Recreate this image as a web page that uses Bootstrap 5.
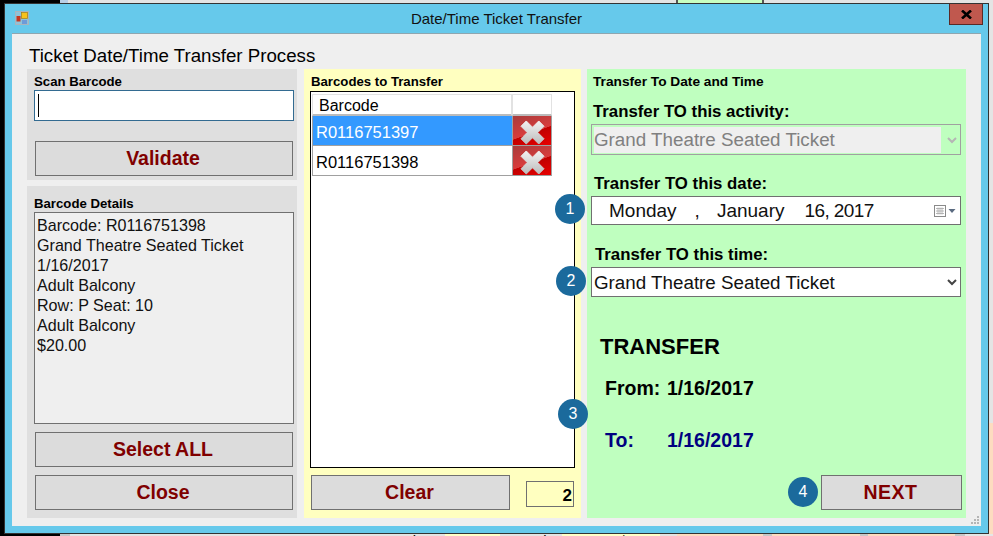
<!DOCTYPE html>
<html><head><meta charset="utf-8"><title>Date/Time Ticket Transfer</title>
<link href="https://cdn.jsdelivr.net/npm/bootstrap@5.3.0/dist/css/bootstrap.min.css" rel="stylesheet">
<style>
html,body{margin:0;height:536px;overflow:hidden;background:#e6e6e6;font-family:"Liberation Sans",Arial,sans-serif;color:#000}
.shell{width:993px;height:536px;display:flex;flex-direction:column}
.strip{display:flex;flex:none;overflow:hidden}
.strip-top{height:3px}
.strip-bot{height:2px;font-size:15px;line-height:13px;font-weight:400;color:#000}
.strip-bot>div{flex:none;height:2px;overflow:hidden;white-space:nowrap}
.midrow{display:flex;flex:none;height:531px}
.leftedge{width:4px;background:#000;flex:none}
.rightedge{width:4px;flex:none;display:flex;flex-direction:column}
.wnd{width:985px;height:531px;background:#66c9eb;border:1px solid #333;padding-left:7px;padding-right:7px;display:flex;flex-direction:column;flex:none}
.tbar{height:29px;flex:none;position:relative}
.tbar .ttl{font-size:15px;line-height:29px;text-align:center;color:#111}
.appico{position:absolute;left:3px;top:7px}
.xbtn{position:absolute;right:-2px;top:0;width:34px;height:21px;background:#c0584e;border:1px solid #5a2a26;border-top:0;display:flex;align-items:center;justify-content:center}
.body-area{width:969px;height:493px;background:#efefef;border-top:1px solid #8ea6b0;position:relative;padding:0 15px;flex:none}
.heading{font-size:18.7px;line-height:22px;height:35px;padding-top:11px;margin-left:2px;box-sizing:border-box;white-space:nowrap}
.cols{display:flex;gap:6px;height:449px}
.col-a{width:270px;margin-right:1px;display:flex;flex-direction:column;gap:6px;flex:none}
.pane-grey{background:#dfdfdf;padding:0 7px}
.pane-scan{height:111px;flex:none}
.pane-det{flex:1}
.ptitle{font-size:13.2px;font-weight:700;line-height:14px;padding-top:6px;height:21px;box-sizing:border-box;white-space:nowrap}
.pane-det .ptitle{padding-top:11px;height:26px}
.scanbox{width:260px;height:31px;background:#fff;border:1px solid #336b91;position:relative}
.scanbox i{position:absolute;left:3px;top:3px;width:1px;height:23px;background:#000}
.wbtn{display:block;background:#dcdcdc;border:1px solid #707070;border-radius:0;color:#800000;font-weight:700;font-size:19.5px;line-height:33px;height:35px;padding:0 2px 0 0;text-align:center;width:258px;margin-left:1px}
.wbtn:hover{background:#dcdcdc;color:#800000;border-color:#707070}
.pane-scan .wbtn{margin-top:20px}
.detbox{width:260px;height:212px;background:#efefef;border:1px solid #707070;font-size:16.1px;line-height:20px;padding:2px 2px;color:#111;white-space:nowrap}
.pane-det .wbtn{margin-top:8px}
.col-b{width:277px;background:#ffffc0;padding:0 0 0 6px;flex:none}
.col-b .ptitle{margin-left:1px}
.gridbox{width:265px;height:377px;background:#fff;border:1px solid #000;padding:2px 0 0 1px;margin-top:1px}
.dg{display:grid;grid-template-columns:200px 40px;font-size:16.5px}
.dg>div{height:30px;line-height:32px;box-sizing:border-box}
.dg>.hd{height:22px;line-height:21px;background:#fff;border:1px solid #e2e2e2;border-bottom:2px solid #bbb;font-size:16px}
.hd.c1{padding-left:6px}
.rowcell{padding-left:3px;border-bottom:1px solid #a0a0a0;border-left:1px solid #a0a0a0}
.rowcell.sel{background:#3399ff;color:#fff}
.delcell{background:linear-gradient(160deg,#a83c3c 0,#d93c3c 55%,#c00000 56%,#e80000 100%);border:1px solid #a0a0a0;border-top:0;display:flex;align-items:center;justify-content:center;padding:3px 0 0}
.footb{display:flex;align-items:flex-start;margin-top:7px}
.footb .wbtn{width:199px;margin-left:1px}
.cnt{width:48px;height:26px;margin-left:16px;background:#ffffc0;border:1px solid #707070;font-size:17px;font-weight:700;line-height:27px;text-align:right;padding-right:1px;margin-top:6px}
.col-c{width:379px;background:#bfffbf;position:relative;padding:0 5px 0 6px;flex:none}
.title-c{font-size:13.7px}
.lbl{font-size:16.8px;font-weight:700;line-height:20px;white-space:nowrap}
.lb1{margin-top:12px}.lb2{margin-top:19px;margin-left:1px}.lb3{margin-top:20px;margin-left:2px}
.fld{width:370px;height:31px;margin-top:2px;border:1px solid #a0a0a0;font-size:18.8px;position:relative;line-height:27px;padding:0 2px;display:flex;align-items:center;justify-content:space-between;margin-left:-2px;white-space:nowrap}
.fld.dis{background:#bfffbf;padding:2px;color:#808080}
.fld.dis span{background:#efefef;width:347px;height:26px;line-height:26px;display:block}
.fld.on{background:#fff;border-color:#707070;color:#111}
.fld.dt{height:29px}.fld.tm{height:30px}
.fld svg{flex:none}
.dtx{display:flex;font-size:19px;padding-left:15px}
.dtx .g1{margin-left:18px}.dtx .g2{margin-left:17px}.dtx .g3{margin-left:20px;letter-spacing:-.6px}
.calico{margin-right:2px}
.mark1{position:absolute;width:30px;height:30px;border-radius:50%;background:#1b6a9c;color:#fff;font-size:16px;line-height:29px;text-align:center}
.m1{left:-32px;top:125px}.m2{left:-31px;top:197px}.m3{left:-29px;top:330px}.m4{left:201px;top:408px}
.trn{font-size:22px;font-weight:700;line-height:24px;margin-top:38px;margin-left:7px}
.fr{font-size:19.5px;font-weight:700;line-height:22px;display:flex;margin-left:12px}
.fr span:first-child{width:62px}
.fr1{margin-top:18px}.fr2{margin-top:30px}
.navy{color:#000080}
.wbtn.nx{position:absolute;left:234px;bottom:8px;width:141px;margin:0;letter-spacing:.5px}
.grip{position:absolute;right:2px;bottom:2px}
.sg-blk{background:#000}.sg-blu{background:#b9cfe6}.sg-gry{background:#e4e4e4}.sg-drk{background:#555}.sg-grn{background:#c8ffc0}.sg-yel{background:#ffffc8}.sg-pch{background:#fddcc0}.sg-mid{background:#c8c8c8}
.ra{text-align:right;padding-right:3px}.pl{padding-left:15px}
.w60{width:60px}.w8{width:8px}.w608{width:608px}.w2{width:2px}.w84{width:84px}.fx{flex:1}
.w10{width:10px}.w302{width:302px}.w73{width:73px}.w55{width:55px}.w62{width:62px}.w98{width:98px}.w17{width:17px}.w86{width:86px}.w9{width:9px}.w88{width:88px}.w87{width:87px}
.h420{height:420px}
</style></head><body>
<div class="shell">
 <div class="strip strip-top">
  <div class="sg-blk w60"></div><div class="sg-blu w8"></div><div class="sg-gry w608"></div><div class="sg-drk w2"></div><div class="sg-grn w84"></div><div class="sg-drk w2"></div><div class="sg-gry fx"></div>
 </div>
 <div class="midrow">
  <div class="leftedge"></div>
  <div class="wnd">
   <div class="tbar">
    <svg class="appico" width="14" height="14" viewBox="0 0 14 14"><rect x=".5" y=".5" width="13" height="13" fill="#8fc3d8" stroke="#aab4bc"/><rect x="6.500" y="1.500" width="6" height="6" fill="#f7c21b" stroke="#a87c10" stroke-width=".7"/><rect x="1.500" y="5" width="4" height="5.500" fill="#c8361e"/><rect x="7" y="9" width="5" height="4" fill="#6d9bd8"/></svg>
    <div class="ttl">Date/Time Ticket Transfer</div>
    <div class="xbtn"><svg width="11" height="9" viewBox="0 0 11 9"><path d="M1 .5l9 8M10 .5l-9 8" stroke="#000" stroke-width="2.600"/></svg></div>
   </div>
   <div class="body-area">
    <div class="heading">Ticket Date/Time Transfer Process</div>
    <div class="cols">
     <div class="col-a">
      <div class="pane-grey pane-scan">
       <div class="ptitle">Scan Barcode</div>
       <div class="scanbox"><i></i></div>
       <button class="btn wbtn">Validate</button>
      </div>
      <div class="pane-grey pane-det">
       <div class="ptitle">Barcode Details</div>
       <div class="detbox">Barcode: R0116751398<br>Grand Theatre Seated Ticket<br>1/16/2017<br>Adult Balcony<br>Row: P Seat: 10<br>Adult Balcony<br>$20.00</div>
       <button class="btn wbtn">Select ALL</button>
       <button class="btn wbtn">Close</button>
      </div>
     </div>
     <div class="col-b">
      <div class="ptitle">Barcodes to Transfer</div>
      <div class="gridbox">
       <div class="dg">
        <div class="hd c1">Barcode</div><div class="hd"></div>
        <div class="rowcell sel">R0116751397</div>
        <div class="delcell"><svg width="25" height="25" viewBox="0 0 26 26"><defs><linearGradient id="gx" x1="0" y1="0" x2="0" y2="1"><stop offset="0" stop-color="#f2f2f2"/><stop offset="1" stop-color="#bcbcbc"/></linearGradient></defs><path d="M1 6.500L6.500 1 13 7.500 19.500 1 25 6.500 18.500 13 25 19.500 19.500 25 13 18.500 6.500 25 1 19.500 7.500 13z" fill="url(#gx)" stroke="url(#gx)" stroke-linejoin="round"/></svg></div>
        <div class="rowcell">R0116751398</div>
        <div class="delcell"><svg width="25" height="25" viewBox="0 0 26 26"><path d="M1 6.500L6.500 1 13 7.500 19.500 1 25 6.500 18.500 13 25 19.500 19.500 25 13 18.500 6.500 25 1 19.500 7.500 13z" fill="url(#gx)" stroke="url(#gx)" stroke-linejoin="round"/></svg></div>
       </div>
      </div>
      <div class="footb"><button class="btn wbtn">Clear</button><div class="cnt">2</div></div>
     </div>
     <div class="col-c">
      <div class="ptitle title-c">Transfer To Date and Time</div>
      <div class="lbl lb1">Transfer TO this activity:</div>
      <div class="fld dis"><span>Grand Theatre Seated Ticket</span><svg width="12" height="8" viewBox="0 0 12 8"><path d="M2 2l4 4 4-4" fill="none" stroke="#b5b5b5" stroke-width="2"/></svg></div>
      <div class="lbl lb2">Transfer TO this date:</div>
      <div class="fld on dt"><div class="dtx"><span>Monday</span><span class="g1">,</span><span class="g2">January</span><span class="g3">16, 2017</span></div><svg class="calico" width="22" height="12" viewBox="0 0 22 12"><rect x=".5" y=".5" width="11" height="11" fill="#fff" stroke="#8a8a8a"/><path d="M2 3.500h8M2 6h8M2 8.500h8M4 2.500v7M6 2.500v7M8 2.500v7" stroke="#a8a8a8" stroke-width=".8"/><path d="M14.500 4h7l-3.500 4z" fill="#5a6a80"/></svg></div>
      <div class="lbl lb3">Transfer TO this time:</div>
      <div class="fld on tm"><span>Grand Theatre Seated Ticket</span><svg width="12" height="8" viewBox="0 0 12 8"><path d="M2 2l4 4 4-4" fill="none" stroke="#444" stroke-width="2"/></svg></div>
      <div class="trn">TRANSFER</div>
      <div class="fr fr1"><span>From:</span><span>1/16/2017</span></div>
      <div class="fr fr2 navy"><span>To:</span><span>1/16/2017</span></div>
      <button class="btn wbtn nx">NEXT</button>
      <div class="mark1 m1">1</div>
      <div class="mark1 m2">2</div>
      <div class="mark1 m3">3</div>
      <div class="mark1 m4">4</div>
     </div>
    </div>
    <svg class="grip" width="9" height="9" viewBox="0 0 9 9" fill="#b5b5b5"><rect x="7" y="1" width="2" height="2"/><rect x="4" y="4" width="2" height="2"/><rect x="7" y="4" width="2" height="2"/><rect x="1" y="7" width="2" height="2"/><rect x="4" y="7" width="2" height="2"/><rect x="7" y="7" width="2" height="2"/></svg>
   </div>
  </div>
  <div class="rightedge"><div class="sg-gry h420"></div><div class="sg-pch fx"></div></div>
 </div>
 <div class="strip strip-bot">
  <div class="sg-blk w60"></div><div class="sg-mid w10"></div><div class="sg-gry w302"></div><div class="sg-gry w73">Quantity:</div><div class="sg-yel w55 ra">0</div><div class="sg-gry w62 pl">Total:</div><div class="sg-yel w98 ra">$0.00</div><div class="sg-gry w17"></div><div class="sg-pch w86"></div><div class="sg-mid w9"></div><div class="sg-pch w88"></div><div class="sg-mid w8"></div><div class="sg-pch w87"></div><div class="sg-mid w10"></div><div class="sg-pch fx"></div>
 </div>
</div>
<script src="https://cdn.jsdelivr.net/npm/bootstrap@5.3.0/dist/js/bootstrap.bundle.min.js"></script>
</body></html>
